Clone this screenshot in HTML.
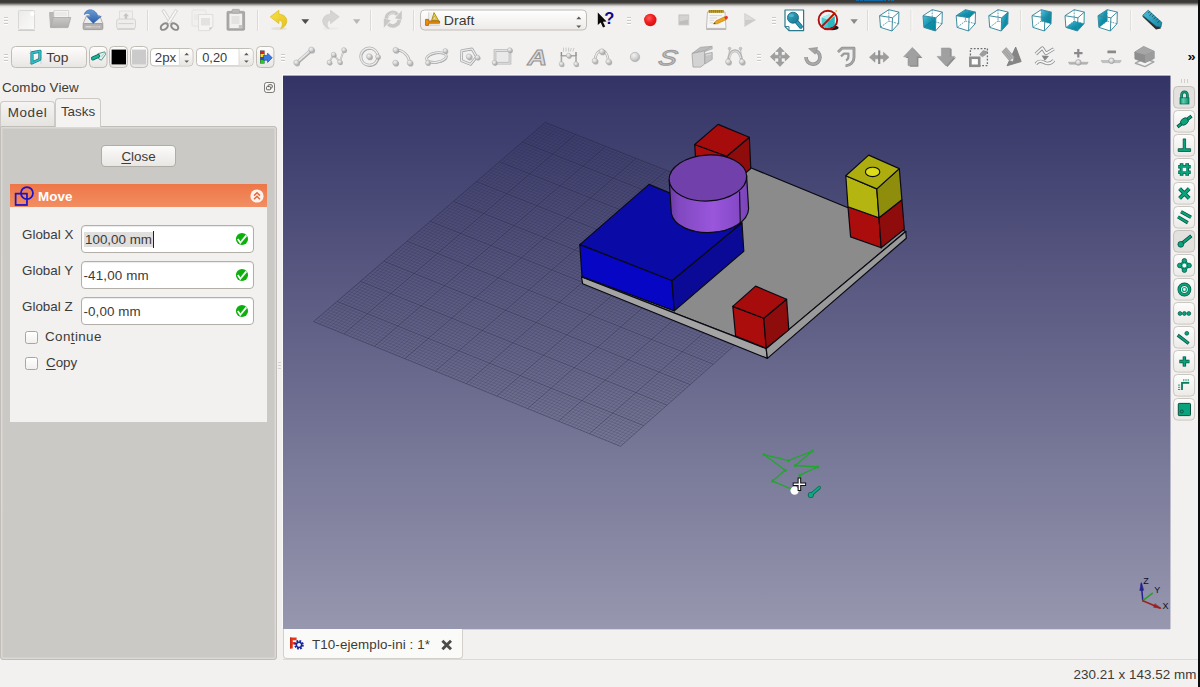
<!DOCTYPE html>
<html lang="en">
<head>
<meta charset="utf-8">
<title>FreeCAD</title>
<style>
html,body{margin:0;padding:0;}
body{width:1200px;height:687px;overflow:hidden;position:relative;background:#f2f1f0;font-family:"Liberation Sans","DejaVu Sans",sans-serif;font-size:13px;color:#3c3b37;}
.abs{position:absolute;}
#topdark{left:0;top:0;width:1200px;height:8px;background:linear-gradient(#3c3b37 0,#3c3b37 29%,#5a5854 40%,#8c8a87 53%,#bcbab7 66%,#e2e1df 80%,#f2f1f0 100%);}
#rightedge{left:1198px;top:0;width:2px;height:687px;background:#0c0c0c;}
#bluemark{left:856px;top:0;width:38px;height:1px;opacity:.85;background:linear-gradient(90deg,#0a70b8 0,#0a70b8 8%,transparent 8%,transparent 10%,#0a70b8 10%,#0a70b8 18%,transparent 18%,transparent 21%,#0a70b8 21%,#0a70b8 70%,transparent 70%,transparent 74%,#0a70b8 74%,#0a70b8 80%,transparent 80%,transparent 83%,#0a70b8 83%,#0a70b8 90%,transparent 90%,transparent 93%,#0a70b8 93%);}
/* left dock */
#combotitle{left:2px;top:80px;font-size:13.4px;letter-spacing:.12px;white-space:nowrap;}
.tab{border:1px solid #cdcac5;border-bottom:none;border-radius:4px 4px 0 0;box-sizing:border-box;text-align:center;white-space:nowrap;}
#tabModel{left:0px;top:101px;width:54.5px;height:25px;background:linear-gradient(#f5f4f3,#e5e3e0);line-height:22.4px;font-size:13.4px;letter-spacing:.6px;text-indent:.6px;}
#tabTasks{left:55px;top:98px;width:46px;height:29.4px;background:#f4f3f2;line-height:25.4px;font-size:13.4px;z-index:3;}
#pane{left:0px;top:126px;width:277px;height:533.5px;box-sizing:border-box;border:1px solid #c1beb9;background:#cbc9c6;border-radius:0 3px 3px 3px;box-shadow:inset 0 0 0 1.4px #dbd9d6;}
#closebtn{left:101px;top:145px;width:75px;height:22px;box-sizing:border-box;border:1px solid #b0aca6;border-radius:4px;background:linear-gradient(#fbfbfa,#e9e7e4);text-align:center;line-height:21.5px;font-size:13.4px;}
#movehdr{left:10px;top:184px;width:257px;height:23px;background:linear-gradient(#ee7647,#f28e63);}
#movetxt{left:38px;top:189px;letter-spacing:.1px;color:#fff;font-weight:bold;font-size:13.4px;}
#content{left:10px;top:207px;width:257px;height:215px;background:#f2f1f0;}
.lbl{font-size:13.4px;white-space:nowrap;}
.fld{left:81px;width:173px;height:28px;box-sizing:border-box;border:1px solid #b2aea8;border-radius:4px;background:#fff;box-shadow:inset 0 1px 1px rgba(0,0,0,.08);}
.fld span{position:absolute;left:4px;top:6px;font-size:13.4px;white-space:nowrap;}
.cb{left:25px;width:13px;height:13px;box-sizing:border-box;border:1px solid #a9a59f;border-radius:2.5px;background:linear-gradient(#fff,#f1f0ef);}
/* bottom */
#doctab{left:283px;top:629px;width:180px;height:30px;box-sizing:border-box;border:1px solid #d3d0cc;border-top:none;border-radius:0 0 4px 4px;background:#fafaf9;}
#tabline{left:283px;top:659px;width:915px;height:1px;background:#dcdad6;}
#status{right:3.5px;top:667px;font-size:13.4px;letter-spacing:.05px;white-space:nowrap;}
#view{left:283px;top:75px;width:888px;height:554px;background:linear-gradient(#333366,#9797af);overflow:hidden;box-shadow:-1px -1px 0 #faf9f9;}
u{text-decoration:underline;text-underline-offset:2px;}
</style>
</head>
<body>
<div id="topdark" class="abs"></div>
<div id="bluemark" class="abs"></div>

<!-- TOOLBARS -->
<div id="toolbars">
<svg class="abs" style="left:0;top:0" width="1200" height="75" viewBox="0 0 1200 75">
<defs>
<g id="hdl"><path d="M0 .5H4M0 3.5H4M0 6.5H4" stroke="#cdcac5" stroke-width="1"/><path d="M0 1.5H4M0 4.5H4M0 7.5H4" stroke="#fff" stroke-width="1"/></g>
<g id="sep"><path d="M.5 0V21" stroke="#dcdad6"/><path d="M1.5 0V21" stroke="#faf9f8"/></g>
<linearGradient id="gpaper" x1="0" y1="0" x2="1" y2="1"><stop offset="0" stop-color="#ebeae8"/><stop offset="1" stop-color="#fbfbfa"/></linearGradient>
<linearGradient id="gfold" x1="0" y1="0" x2="0" y2="1"><stop offset="0" stop-color="#c9c8c6"/><stop offset="1" stop-color="#aeadab"/></linearGradient>
<linearGradient id="gblue" x1="0" y1="0" x2="0" y2="1"><stop offset="0" stop-color="#6a9bd6"/><stop offset="1" stop-color="#2a5ea8"/></linearGradient>
<linearGradient id="gyel" x1="0" y1="0" x2="1" y2="1"><stop offset="0" stop-color="#f8e14a"/><stop offset="1" stop-color="#e4c21c"/></linearGradient>
<linearGradient id="gcombo" x1="0" y1="0" x2="0" y2="1"><stop offset="0" stop-color="#ffffff"/><stop offset="1" stop-color="#ecebe9"/></linearGradient>
<radialGradient id="gred" cx=".4" cy=".35" r=".7"><stop offset="0" stop-color="#ff5a5a"/><stop offset=".5" stop-color="#ef2020"/><stop offset="1" stop-color="#d40c0c"/></radialGradient>
<linearGradient id="grul" x1="0" y1="0" x2="1" y2="1"><stop offset="0" stop-color="#4cc0dc"/><stop offset="1" stop-color="#1a86a4"/></linearGradient><linearGradient id="gteal" x1="0" y1="0" x2="1" y2="1"><stop offset="0" stop-color="#3aa8c4"/><stop offset="1" stop-color="#12778f"/></linearGradient>
<radialGradient id="gball" cx=".38" cy=".32" r=".75"><stop offset="0" stop-color="#f2f2f2"/><stop offset=".55" stop-color="#d2d2d2"/><stop offset="1" stop-color="#a6a6a6"/></radialGradient>
</defs>
<!-- row 1 handles -->
<use href="#hdl" x="4" y="17"/>
<!-- new -->
<rect x="18.5" y="10.5" width="16" height="19" rx="1" fill="url(#gpaper)" stroke="#d9d7d4"/><path d="M18 30.5H35" stroke="#d0cecb" stroke-width="1"/><circle cx="32.3" cy="13.8" r="2.2" fill="#fff"/>
<!-- open -->
<path d="M49.5 12.5H53L54 11.5H58V27H50.5Z" fill="#b9b8b6" stroke="#b0afad" stroke-width=".8"/><path d="M54 10.5H68.6V20H54Z" fill="#f4f3f2" stroke="#cfcecb" stroke-width=".8"/><path d="M55.5 13H67M55.5 15H67" stroke="#dddcda" stroke-width=".8"/><path d="M53.2 17.5H70.8L68 27.6H50.6Z" fill="url(#gfold)" stroke="#a9a8a6" stroke-width=".8"/>
<!-- save -->
<path d="M86.6 15.5H99.6L103 24H83Z" fill="#edecea" stroke="#a8a7a5" stroke-width=".9"/><rect x="83.2" y="23.6" width="19.6" height="6" rx="1.2" fill="#b4b3b1" stroke="#9a9997" stroke-width=".9"/><path d="M85.5 26.7H100" stroke="#d8d7d5" stroke-width="1.6" stroke-dasharray="6 1 1 1 1 1 1 1"/><path d="M84.3 14.6C85 10 91 8.2 95 11.6C97 13.3 97.6 15 97.8 16.4H101.3L93.2 23.4L86.8 16.4H90.8C90.5 13.5 87 12.6 84.3 14.6Z" fill="url(#gblue)" stroke="#3a6cb4" stroke-width=".6"/>
<!-- print (disabled) -->
<rect x="119.5" y="11" width="13" height="9" fill="#f0efed" stroke="#dbd9d6" stroke-width=".8"/><path d="M126 13L129 16.2H127.2V19H124.8V16.2H123Z" fill="#c6c5c3"/><rect x="116.7" y="19" width="18.8" height="9.6" rx="2" fill="#eeedeb" stroke="#d2d0cd" stroke-width=".9"/><path d="M118.5 23.6H133.5" stroke="#d2d0cd" stroke-width="1"/><path d="M117 29.3H135" stroke="#cfcdca" stroke-width="1"/>
<use href="#sep" x="147" y="10"/>
<!-- cut -->
<path d="M161.9 10.8L164 9.4L172.3 22.6L170 23.9Z" fill="#f6f5f4" stroke="#cbc9c6" stroke-width=".8"/><path d="M177.5 10.8L175.4 9.4L167.1 22.6L169.4 23.9Z" fill="#f8f7f6" stroke="#cbc9c6" stroke-width=".8"/><ellipse cx="164.3" cy="26.6" rx="4" ry="2.7" transform="rotate(-38 164.3 26.6)" fill="none" stroke="#8e8d8b" stroke-width="2"/><ellipse cx="174.7" cy="26.6" rx="4" ry="2.7" transform="rotate(38 174.7 26.6)" fill="none" stroke="#8e8d8b" stroke-width="2"/>
<!-- copy -->
<rect x="192" y="10" width="14" height="16" rx="1" fill="#f1f0ee" stroke="#e2e0dd" stroke-width=".8"/><path d="M194 15H201M194 17H201M194 19H201" stroke="#e3e1df" stroke-width=".8"/><path d="M198.5 14.5H212.8V27L209.5 30.6H198.5Z" fill="#f5f4f3" stroke="#dad8d5" stroke-width=".8"/><rect x="201" y="18" width="9" height="7.5" fill="#e3e2e0"/><path d="M209.4 30.4V27.2H212.6Z" fill="#cfcecb"/>
<!-- paste -->
<rect x="227" y="11.4" width="17.6" height="18.8" rx="1" fill="#a9a8a6" stroke="#9d9c9a" stroke-width=".8"/><rect x="229.4" y="13.6" width="12.8" height="14.6" fill="#f1f0ee"/><rect x="231.5" y="16" width="8" height="8" fill="#e3e2e0"/><rect x="232" y="9.3" width="7.6" height="4" rx="1" fill="#bab9b7" stroke="#a3a2a0" stroke-width=".6"/><path d="M238.8 28.2V25H242.2V28.2Z" fill="#c6c5c3"/>
<use href="#sep" x="257" y="10"/>
<!-- undo -->
<ellipse cx="279" cy="28.6" rx="8" ry="1.6" fill="#e4e2df"/>
<path d="M270.3 16.8L278.9 10.3V14.2C284.2 14.4 287 17.6 286.7 21.6C286.4 25 283.8 27.8 280.7 28.6C282.6 26 283 22.7 281 20.9C280.4 20.3 279.7 20.1 278.9 20.1V23.6Z" fill="url(#gyel)" stroke="#d8b81a" stroke-width=".7" stroke-linejoin="round"/>
<path d="M301.4 19.2H309.2L305.3 24.1Z" fill="#4d4c4a"/>
<!-- redo -->
<ellipse cx="330.5" cy="28.6" rx="8" ry="1.4" fill="#eceae8"/>
<path d="M339.2 16.8L330.6 10.3V14.2C325.3 14.4 322.5 17.6 322.8 21.6C323.1 25 325.7 27.8 328.8 28.6C326.9 26 326.5 22.7 328.5 20.9C329.1 20.3 329.8 20.1 330.6 20.1V23.6Z" fill="#d6d5d3" stroke="#cbcac8" stroke-width=".7" stroke-linejoin="round"/>
<path d="M353 19.2H360.4L356.7 24.1Z" fill="#b9b7b4"/>
<use href="#sep" x="370" y="10"/>
<!-- refresh -->
<g fill="none" stroke="#c9c8c6" stroke-width="3.6"><path d="M386.3 18.6A6.5 6.5 0 0 1 397.4 14.4"/><path d="M399.3 19.8A6.5 6.5 0 0 1 388.2 24"/></g><path d="M394.8 18.2L401.8 10.6V19.8Z" fill="#c9c8c6"/><path d="M390.8 20.2L383.8 27.8V18.6Z" fill="#c9c8c6"/><path d="M388 17A5 5 0 0 1 395 13.4" fill="none" stroke="#dddcda" stroke-width="1"/>
<use href="#sep" x="413" y="10"/>
<!-- combo -->
<rect x="420.5" y="10" width="166" height="20" rx="4" fill="url(#gcombo)" stroke="#c0bcb6"/>
<path d="M576.3 19.2L578.8 16.6L581.3 19.2Z M576.3 25.4L578.8 28L581.3 25.4Z" fill="#5c5b58"/>
<!-- draft icon -->
<path d="M431 12.4V26.4" stroke="#e8e6e2" stroke-width="1"/><path d="M428.8 12.2V25.2H439.8" stroke="#bdbbb7" stroke-width=".7" fill="none"/>
<path d="M434 12.6L438.6 20.6H431.6Z" fill="#f2d438" stroke="#9a7a10" stroke-width=".8" stroke-linejoin="round"/><path d="M434.2 16L436.2 19.2H432.8Z" fill="#f8f0b0" stroke="#9a7a10" stroke-width=".4"/>
<path d="M425.6 19.4H428.4V21H439.6V23.2H428.4V25.4H425.6Z" fill="#f0900c" stroke="#a45c04" stroke-width=".8" stroke-linejoin="round"/>
<text x="443.8" y="24.6" font-size="13.4" fill="#3c3b37" textLength="30.6" lengthAdjust="spacingAndGlyphs">Draft</text>
<!-- whats this -->
<path d="M597.8 12.6V25L600.7 22.6L603 27.6L605.2 26.6L602.9 21.8L606.6 21.4Z" fill="#0a0a0a"/>
<text x="604.2" y="24.4" font-size="16.5" font-weight="bold" fill="#0c0c8c">?</text>
<use href="#hdl" x="627" y="17"/>
<!-- record -->
<circle cx="650.3" cy="20" r="6.2" fill="url(#gred)"/>
<!-- stop -->
<rect x="678.8" y="14.8" width="10" height="10.2" fill="#bfbebc" stroke="#cfcecc" stroke-width=".8"/><path d="M679.4 15.4H688.2V19.4L679.4 21.4Z" fill="#d4d3d1"/>
<!-- notepad -->
<path d="M707.5 12H725L726 28.4H706.4Z" fill="#f6f6f5" stroke="#b9b8b6" stroke-width=".9"/><path d="M706.2 29.3H726.2" stroke="#b3b2b0" stroke-width="1.2"/>
<rect x="708.4" y="10" width="15.6" height="2.8" rx=".8" fill="#b9982a"/><path d="M709.5 10V12.8M711.5 10V12.8M713.5 10V12.8M715.5 10V12.8M717.5 10V12.8M719.5 10V12.8M721.5 10V12.8" stroke="#8a6e16" stroke-width=".6"/>
<path d="M709.6 15.6H722M709.6 18H717M709.6 20.4H714M709.6 22.8H713" stroke="#cfcecc" stroke-width=".8"/>
<path d="M713.4 24L716 20.8L725 16.6L726.6 19.4L717.4 23.8Z" fill="#eba51e" stroke="#a8700c" stroke-width=".5"/><path d="M724.2 17L726.4 15.9C727.2 15.6 728.4 17.6 727.6 18.4L725.6 19.6Z" fill="#e43030"/><path d="M713.4 24L714.6 22.4L715.6 23.4Z" fill="#333"/>
<!-- play -->
<path d="M744.6 13.4L755.6 20L744.6 26.6Z" fill="#cbcac8" stroke="#d6d5d3" stroke-width=".8"/><path d="M745.2 14.4L754 19.7L745.2 19.9Z" fill="#dddcda"/>
<use href="#hdl" x="772" y="17"/>
<!-- fit all -->
<path d="M785 10H803.6V30.6H789L785 26.6Z" fill="#fff" stroke="#2a7a8c" stroke-width="1.2" stroke-linejoin="round"/><path d="M785 26.6H789V30.6" fill="none" stroke="#2a7a8c" stroke-width="1"/>
<path d="M796.4 21.4L800.8 26.6" stroke="#1a6c80" stroke-width="4.2" stroke-linecap="round"/><path d="M796.4 21.4L800.8 26.6" stroke="#2a9ab8" stroke-width="2.6" stroke-linecap="round"/>
<circle cx="793" cy="17.7" r="5.5" fill="url(#gteal)" stroke="#156a80" stroke-width=".9"/><ellipse cx="791.4" cy="15.6" rx="2.6" ry="1.6" fill="#5cc0d8" opacity=".7"/>
<!-- no draw style -->
<ellipse cx="832" cy="27.8" rx="6.6" ry="2.4" fill="#1a1a1a"/>
<path d="M821.6 17.4L829 14.4L834.6 16.6V26L827.6 28.6L821.6 26Z" fill="#3fd0d6"/><path d="M821.6 17.4L829 14.4L834.6 16.6L827.6 19.6Z" fill="#a8ecee"/><path d="M827.6 19.6V28.6L834.6 26V16.6Z" fill="#2cb8c0"/>
<path d="M828.6 18.6L834.6 11.8L836.2 13L830.4 20Z" fill="#f4d820"/><circle cx="836.2" cy="11" r=".8" fill="#f09010"/>
<circle cx="827.9" cy="20" r="9.3" fill="none" stroke="#b00f0f" stroke-width="1.9"/><path d="M821.4 26.8L834.6 13.4" stroke="#b00f0f" stroke-width="1.9"/>
<path d="M850.4 19.2H857.8L854.1 24Z" fill="#8a8987"/>
<use href="#sep" x="867" y="10"/>
<!-- cubes -->
<defs>
<g id="cubeb"><path d="M.6 6.7L9.8 .7L19.9 3.1L19.6 14.7L13 22L1.5 18.4Z" fill="#fff"/></g>
<g id="cubew" fill="none" stroke="#35879b" stroke-linejoin="round"><path d="M9.8 .7V12L1.5 18.4M9.8 12L19.6 14.7" stroke-width=".8" stroke-dasharray="1.8 1"/><path d="M.6 6.7L9.8 .7L19.9 3.1L19.6 14.7L13 22L1.5 18.4ZM.6 6.7L13.5 8.8L19.9 3.1M13.5 8.8L13 22" stroke-width=".95"/></g>
<linearGradient id="gcf" x1="0" y1="0" x2="1" y2="1"><stop offset="0" stop-color="#52c0da"/><stop offset=".55" stop-color="#0e8eaa"/><stop offset="1" stop-color="#08829c"/></linearGradient>
</defs>
<g transform="translate(879 9)"><use href="#cubeb"/><use href="#cubew"/></g>
<use href="#sep" x="910.5" y="10"/>
<g transform="translate(922.4 9)"><use href="#cubeb"/><path d="M.6 6.7L13.5 8.8L13 22L1.5 18.4Z" fill="url(#gcf)"/><path d="M1.5 18.4L9.8 12L13.3 13.4" stroke="#066e84" stroke-width=".8" fill="none"/><use href="#cubew"/></g>
<g transform="translate(955.6 9)"><use href="#cubeb"/><path d="M.6 6.7L9.8 .7L19.9 3.1L13.5 8.8Z" fill="url(#gcf)"/><use href="#cubew"/></g>
<g transform="translate(988.2 9)"><use href="#cubeb"/><path d="M13.5 8.8L19.9 3.1L19.6 14.7L13 22Z" fill="url(#gcf)"/><use href="#cubew"/></g>
<use href="#sep" x="1020.2" y="10"/>
<g transform="translate(1031.4 9)"><use href="#cubeb"/><path d="M9.8 .7L19.9 3.1L19.6 14.7L9.8 12Z" fill="url(#gcf)"/><use href="#cubew"/></g>
<g transform="translate(1064.4 9)"><use href="#cubeb"/><path d="M1.5 18.4L9.8 12L19.6 14.7L13 22Z" fill="url(#gcf)"/><use href="#cubew"/></g>
<g transform="translate(1097.4 9)"><use href="#cubeb"/><path d="M.6 6.7L9.8 .7V12L1.5 18.4Z" fill="url(#gcf)"/><use href="#cubew"/></g>
<use href="#sep" x="1130.2" y="10"/>
<!-- ruler -->
<path d="M1142.4 16.6L1156 29.6L1160.8 28.4L1160 24.4L1146 13.4Z" fill="#2c2c2c"/>
<path d="M1142.6 15.4L1148.2 10.2L1161.8 22.4L1160.9 27.2L1156.4 26.6Z" fill="url(#grul)" stroke="#0f5e72" stroke-width=".7" stroke-linejoin="round"/>
<path d="M1149.6 11.6L1148.2 13.2M1151.6 13.4L1149.6 15.6M1153.6 15.2L1152.2 16.8M1155.6 17L1153.6 19.2M1157.6 18.8L1156.2 20.4M1159.6 20.6L1157.6 22.8" stroke="#083e4c" stroke-width=".8"/>
<!-- ROW 2 -->
<defs>
<linearGradient id="gbtn" x1="0" y1="0" x2="0" y2="1"><stop offset="0" stop-color="#fdfdfc"/><stop offset="1" stop-color="#e8e6e3"/></linearGradient>
<g id="ball"><circle cx=".9" cy="1" r="2.8" fill="#8c8c8c" opacity=".6"/><circle r="2.7" fill="url(#gball)" stroke="#b0b0b0" stroke-width=".5"/></g>
<g id="sball"><circle cx=".8" cy=".9" r="2.4" fill="#8c8c8c" opacity=".6"/><circle r="2.3" fill="url(#gball)" stroke="#b0b0b0" stroke-width=".5"/></g>
</defs>
<use href="#hdl" x="4" y="54"/>
<rect x="11.5" y="46.5" width="75" height="21" rx="4" fill="url(#gbtn)" stroke="#c0bcb6"/>
<g fill="none" stroke-linejoin="round"><path d="M32 52.8L40 51.2L39.8 59.4L32 63Z" stroke="#0f6e78" stroke-width="3"/><path d="M32 52.8L40 51.2L39.8 59.4L32 63Z" stroke="#2ec4cc" stroke-width="1.7"/><path d="M30.6 49.6V64.6M41 55V64M29 53.4L42 51.2M29.4 63.6L42 57.6" stroke="#4aa0aa" stroke-width=".5" opacity=".55"/></g>
<text x="46.2" y="61.8" font-size="13.4" fill="#3c3b37" textLength="22.2" lengthAdjust="spacingAndGlyphs">Top</text>
<rect x="89.5" y="46.5" width="17.5" height="21" rx="4" fill="url(#gbtn)" stroke="#c0bcb6"/>
<path d="M97.8 53.8L104.8 51.8L105.6 54.4L101.4 60.2L98.8 59Z" fill="#dff2ec" stroke="#3c7e70" stroke-width=".8" stroke-linejoin="round"/><path d="M101 56.6L104.6 53.2" stroke="#9ad4c4" stroke-width="1"/><path d="M93 58.4L98.2 56" stroke="#0a6a58" stroke-width="4" stroke-linecap="round"/><path d="M93 58.4L98.2 56" stroke="#16b49a" stroke-width="2.4" stroke-linecap="round"/>
<rect x="109.5" y="46.5" width="18" height="21" rx="4" fill="url(#gbtn)" stroke="#c0bcb6"/><rect x="111.6" y="49.6" width="14.4" height="14.8" fill="#000"/>
<rect x="130.5" y="46.5" width="17.2" height="21" rx="4" fill="url(#gbtn)" stroke="#c0bcb6"/><rect x="132" y="49.6" width="14" height="14.8" fill="#cbcbcb"/>
<rect x="150.5" y="48.5" width="42.4" height="17.4" rx="3.5" fill="#fff" stroke="#c0bcb6"/><path d="M179.4 49V65.4H189.4A3 3 0 0 0 192.4 62.4V52A3 3 0 0 0 189.4 49Z" fill="url(#gbtn)"/><path d="M179.4 49V65.4" stroke="#d8d5d0" stroke-width=".8"/>
<path d="M184.4 55.2L186.7 52.8L189 55.2ZM184.4 60.4L186.7 62.8L189 60.4Z" fill="#5c5b58"/>
<text x="154.8" y="62.4" font-size="13.4" fill="#3c3b37" textLength="21.4" lengthAdjust="spacingAndGlyphs">2px</text>
<rect x="196.5" y="48.5" width="56.6" height="17.4" rx="3.5" fill="#fff" stroke="#c0bcb6"/><path d="M239 49V65.4H249.6A3 3 0 0 0 252.6 62.4V52A3 3 0 0 0 249.6 49Z" fill="url(#gbtn)"/><path d="M239 49V65.4" stroke="#d8d5d0" stroke-width=".8"/>
<path d="M244.1 55.2L246.4 52.8L248.7 55.2ZM244.1 60.4L246.4 62.8L248.7 60.4Z" fill="#5c5b58"/>
<text x="202.2" y="62.4" font-size="13.4" fill="#3c3b37" textLength="25" lengthAdjust="spacingAndGlyphs">0,20</text>
<rect x="256.5" y="46.5" width="17.4" height="21" rx="4" fill="url(#gbtn)" stroke="#c0bcb6"/>
<rect x="260" y="50.4" width="4.6" height="13.2" fill="#555"/><rect x="260.6" y="51" width="3.6" height="3" fill="#f01818"/><rect x="260.6" y="54" width="3.6" height="3" fill="#f4e020"/><rect x="260.6" y="57" width="3.6" height="3" fill="#2848d8"/><rect x="260.6" y="60" width="3.6" height="3" fill="#20d020"/>
<path d="M263.4 55.4H267.6V53.2L272.2 57.8L267.6 62.4V60.2H263.4Z" fill="#3a7ae0" stroke="#1c4a9c" stroke-width=".7" stroke-linejoin="round"/>
<use href="#hdl" x="281" y="54"/>
<!-- line -->
<path d="M297.6 64L312.6 50.8" stroke="#a6a6a6" stroke-width="1.2"/><path d="M296.4 62.8L311.4 49.5" stroke="#b9b9b9" stroke-width="2.8"/><path d="M296.4 62.8L311.4 49.5" stroke="#ececec" stroke-width="1.4"/><use href="#ball" x="296.4" y="62.6"/><use href="#ball" x="311.4" y="49.7"/>
<!-- wire -->
<path d="M329.3 62.4L333.5 54.5L339.8 62L343.9 49.9" fill="none" stroke="#b4b4b4" stroke-width="1.8"/><path d="M329.3 62.4L333.5 54.5L339.8 62L343.9 49.9" fill="none" stroke="#e4e4e4" stroke-width=".8"/><use href="#sball" x="329.3" y="62.4"/><use href="#sball" x="333.5" y="54.5"/><use href="#sball" x="339.8" y="62"/><use href="#sball" x="343.9" y="49.9"/>
<!-- circle -->
<circle cx="370" cy="57.5" r="8.6" fill="none" stroke="#a0a0a0" stroke-width="1.6"/><circle cx="369.3" cy="56.6" r="8.6" fill="none" stroke="#b4b4b4" stroke-width="2.8"/><circle cx="369.3" cy="56.6" r="8.6" fill="none" stroke="#ededed" stroke-width="1.3"/><use href="#ball" x="369.2" y="56.4"/><use href="#sball" x="377.8" y="56.6"/>
<!-- arc -->
<path d="M396.4 50.8C403.8 50.8 409.4 55.9 410.6 63.7" fill="none" stroke="#a0a0a0" stroke-width="1.6"/><path d="M395.6 49.9C403 49.9 408.6 55 409.8 62.8" fill="none" stroke="#b2b2b2" stroke-width="2.8"/><path d="M395.6 49.9C403 49.9 408.6 55 409.8 62.8" fill="none" stroke="#ececec" stroke-width="1.3"/><use href="#ball" x="395.6" y="50"/><use href="#ball" x="409.8" y="62.8"/><use href="#ball" x="395.4" y="62.8"/>
<!-- ellipse -->
<ellipse cx="437" cy="58.2" rx="10" ry="4.7" transform="rotate(-9 437 58.2)" fill="none" stroke="#a2a2a2" stroke-width="1.4"/><ellipse cx="436.4" cy="57.4" rx="10" ry="4.7" transform="rotate(-9 436.4 57.4)" fill="none" stroke="#b2b2b2" stroke-width="2.6"/><ellipse cx="436.4" cy="57.4" rx="10" ry="4.7" transform="rotate(-9 436.4 57.4)" fill="none" stroke="#ececec" stroke-width="1.2"/><use href="#sball" x="445.2" y="50.8"/><use href="#sball" x="427.7" y="62.8"/>
<!-- polygon -->
<path d="M472.6 49.6L462.4 51.2L462 61.2L471 64.9L477.2 57.4Z" fill="none" stroke="#9a9a9a" stroke-width="1.2" stroke-linejoin="round"/><path d="M472 49L461.8 50.6L461.4 60.6L470.4 64.3L476.6 56.8Z" fill="none" stroke="#adadad" stroke-width="2.8" stroke-linejoin="round"/><path d="M472 49L461.8 50.6L461.4 60.6L470.4 64.3L476.6 56.8Z" fill="none" stroke="#ececec" stroke-width="1.2" stroke-linejoin="round"/><use href="#ball" x="468.9" y="56.6"/><use href="#sball" x="477.4" y="57.4"/>
<!-- rectangle -->
<rect x="495" y="50.6" width="15" height="12.6" fill="#e9e9e9" stroke="#b4b4b4" stroke-width="2.6"/><rect x="495" y="50.6" width="15" height="12.6" fill="none" stroke="#e6e6e6" stroke-width="1"/><use href="#sball" x="509.8" y="50"/><use href="#sball" x="494.4" y="62.6"/>
<!-- text A -->
<text x="527.4" y="65.2" font-size="22" font-weight="bold" font-style="italic" fill="#dadada" stroke="#939393" stroke-width="1" textLength="19.5" lengthAdjust="spacingAndGlyphs">A</text>
<!-- dimension -->
<path d="M561.4 64V55.8H576V64" fill="none" stroke="#a8a8a8" stroke-width="1.6"/><path d="M561.4 55.8V52M576 55.8V52" stroke="#8c8c8c" stroke-width="1.4"/><path d="M563.5 47.6V51.6M566 47.6V51.6M568.6 47.6V51.6M571.4 48L570 51.6M574 48L572.8 51.6" stroke="#c4c4c4" stroke-width=".9"/><use href="#sball" x="561.4" y="64"/><use href="#sball" x="576" y="64"/><use href="#sball" x="568.6" y="55.6"/>
<!-- bspline -->
<path d="M594.8 60.8C595.5 54 598.5 50.6 601.8 50.6C605.4 50.6 607.8 55 608.5 61.6" fill="none" stroke="#b4b4b4" stroke-width="2.6"/><path d="M594.8 60.8C595.5 54 598.5 50.6 601.8 50.6C605.4 50.6 607.8 55 608.5 61.6" fill="none" stroke="#ececec" stroke-width="1.1"/><use href="#ball" x="594.8" y="60.8"/><use href="#ball" x="601.8" y="51.4"/><use href="#ball" x="608.5" y="61.6"/>
<!-- point -->
<circle cx="635" cy="57" r="4.7" fill="url(#gball)" stroke="#b2b2b2" stroke-width=".7"/>
<!-- shapestring S -->
<g transform="translate(0 57) skewX(-12) translate(0 -57)"><text x="659" y="64.6" font-size="21" font-style="italic" fill="#c4c4c4" stroke="#9c9c9c" stroke-width="1" textLength="18.5" lengthAdjust="spacingAndGlyphs">S</text></g>
<!-- facebinder -->
<path d="M692 53.5L700.4 47.3L712.1 46.3L704.6 50.8Z" fill="#bcbcbc" stroke="#a2a2a2" stroke-width=".7" stroke-linejoin="round"/><path d="M692 53.5L704.6 50.8V64L700.6 67.1H693Z" fill="#d3d3d3" stroke="#a2a2a2" stroke-width=".8" stroke-linejoin="round"/><path d="M704.9 50.9L712.2 46.5V48.9L704.9 51.6Z" fill="#c6c6c6" stroke="#a2a2a2" stroke-width=".6"/><path d="M704.9 54L712.2 52.4V59.4L704.9 64Z" fill="#c4c4c4" stroke="#a6a6a6" stroke-width=".8" stroke-linejoin="round"/><path d="M705.8 55.2L711.3 54" stroke="#e4e4e4" stroke-width=".8"/>
<!-- bezier -->
<path d="M728.2 61.7L729.6 48.8M741.9 61.7L740.5 48.8" stroke="#b4b4b4" stroke-width=".9"/><path d="M728.2 61.7C729 54 731.6 50.8 735 50.8C738.6 50.8 741 54 741.9 61.7" fill="none" stroke="#b2b2b2" stroke-width="3"/><path d="M729.4 58C730.4 53.4 732.4 51 735 51C737.8 51 739.8 53.4 740.8 58" fill="none" stroke="#dedede" stroke-width="1.2"/><circle cx="729.6" cy="48.6" r="1.4" fill="#c9c9c9" stroke="#a8a8a8" stroke-width=".5"/><circle cx="740.5" cy="48.6" r="1.4" fill="#c9c9c9" stroke="#a8a8a8" stroke-width=".5"/><use href="#ball" x="728.2" y="61.7"/><use href="#ball" x="741.9" y="61.7"/>
<use href="#hdl" x="757" y="54"/>
<!-- move -->
<path d="M780 47L784.2 51.5H781.4V55.3H785.2V52.5L789.7 56.7L785.2 60.9V58.1H781.4V62H784.2L780 66.5L775.8 62H778.6V58.1H774.8V60.9L770.3 56.7L774.8 52.5V55.3H778.6V51.5H775.8Z" fill="#9f9f9f" stroke="#8c8c8c" stroke-width=".5" stroke-linejoin="round"/><rect x="778.9" y="55.6" width="2.2" height="2.2" fill="#b6b6b6"/>
<!-- rotate -->
<path d="M806 57A7 7 0 1 0 813.4 50.2" fill="none" stroke="#8f8f8f" stroke-width="3.6"/><path d="M806 57A7 7 0 1 0 813.4 50.2" fill="none" stroke="#a9a9a9" stroke-width="2.2"/><path d="M808.6 48.6L817.6 47.4L815.2 54.2Z" fill="#a4a4a4" stroke="#8f8f8f" stroke-width=".6" stroke-linejoin="round"/>
<!-- offset -->
<path d="M838 52L842 48.2H854V57.6C854 62 850.4 65.4 845.6 65.8" fill="none" stroke="#8f8f8f" stroke-width="2.8" stroke-linejoin="round"/><path d="M838 52L842 48.2H854V57.6C854 62 850.4 65.4 845.6 65.8" fill="none" stroke="#a6a6a6" stroke-width="1.4" stroke-linejoin="round"/><path d="M841 56.4L844 53.6H848.4V56.6C848.4 58.6 847.6 59.8 846 60.4" fill="none" stroke="#9a9a9a" stroke-width="2.2" stroke-linejoin="round"/>
<!-- trimex -->
<path d="M869.4 57.2L875 52.2V55.6H883.4V52.2L889 57.2L883.4 62.2V58.8H875V62.2Z" fill="#9d9d9d" stroke="#8e8e8e" stroke-width=".5" stroke-linejoin="round"/><path d="M879.2 50.4V64" stroke="#8e8e8e" stroke-width="2.2"/>
<!-- upgrade -->
<path d="M914 49L922.4 58H918.4V66.8H909.8V58H905.4Z" fill="#8c8c8c"/><path d="M912.3 47.4L921 56.8H917V65.6H908V56.8H903.6Z" fill="#a0a0a0" stroke="#909090" stroke-width=".5" stroke-linejoin="round"/>
<!-- downgrade -->
<path d="M947.4 67L956 57.6H951.6V48.8H943V57.6H938.6Z" fill="#8c8c8c"/><path d="M946 66L954.6 56.4H950.2V48H941.4V56.4H937Z" fill="#a0a0a0" stroke="#909090" stroke-width=".5" stroke-linejoin="round"/>
<!-- scale -->
<rect x="970.4" y="48.6" width="17" height="17" fill="none" stroke="#6e6e6e" stroke-width="1.3" stroke-dasharray="1.8 1.6"/><rect x="970.4" y="57.8" width="8.8" height="8" fill="#fdfdfd" stroke="#8c8c8c" stroke-width="2.6"/><path d="M979.6 54.6L983 50.6L987.4 51.6L986 54.4L982.4 56.8Z" fill="#9d9d9d" stroke="#8a8a8a" stroke-width=".5"/>
<!-- draft2sketch -->
<path d="M1015.7 47L1007 65.8L1021.2 61.6Z" fill="#858585" stroke="#7a7a7a" stroke-width=".8" stroke-linejoin="round"/><path d="M1002 51.8L1006.2 47.6L1014.4 57L1012.8 61.4L1009.2 60.4Z" fill="#b0b0b0" stroke="#8a8a8a" stroke-width=".6" stroke-linejoin="round"/><path d="M1009.4 60.2L1012.8 61.4L1013.6 58Z" fill="#fafafa" stroke="#8a8a8a" stroke-width=".4"/><path d="M1003.4 50.6L1011 59.6M1004.8 49.2L1012.4 58.2" stroke="#8f8f8f" stroke-width=".6"/>
<!-- wire to bspline -->
<path d="M1035.9 53.9L1042.3 48L1046 53.5L1053.8 48.9" fill="none" stroke="#8f8f8f" stroke-width="3.4" stroke-linejoin="round"/><path d="M1035.9 53.9L1042.3 48L1046 53.5L1053.8 48.9" fill="none" stroke="#f6f6f6" stroke-width="1.7" stroke-linejoin="round"/><path d="M1041.6 55.4L1049 56L1044.8 60.8Z" fill="#858585"/><path d="M1035.9 63.8C1040 58.8 1043 62.4 1046 63.2C1049.4 64 1052 62.6 1053.8 60.4" fill="none" stroke="#8f8f8f" stroke-width="3.4"/><path d="M1035.9 63.8C1040 58.8 1043 62.4 1046 63.2C1049.4 64 1052 62.6 1053.8 60.4" fill="none" stroke="#f6f6f6" stroke-width="1.7"/>
<!-- add point -->
<path d="M1078.3 49V57.4M1074.1 53.2H1082.5" stroke="#8a8a8a" stroke-width="2.2"/><path d="M1068.4 62.2H1088.2L1087 64.2H1069.6Z" fill="#b4b4b4" stroke="#a0a0a0" stroke-width=".5"/><circle cx="1078.3" cy="62.4" r="2.8" fill="url(#gball)" stroke="#999" stroke-width=".6"/>
<!-- del point -->
<rect x="1107.4" y="50.4" width="8.6" height="2.8" rx=".5" fill="#8a8a8a"/><path d="M1101.2 60.6H1121.2L1120 62.6H1102.4Z" fill="#c4c4c4" stroke="#a0a0a0" stroke-width=".5"/><circle cx="1111.5" cy="60.8" r="2.8" fill="url(#gball)" stroke="#999" stroke-width=".6"/>
<!-- shape2dview -->
<path d="M1135.4 63.2L1145 66.6L1153.8 61.8L1144 58.6Z" fill="#f4f4f4" stroke="#a6a6a6" stroke-width="1.5" stroke-linejoin="round"/>
<path d="M1134.7 52.1L1143.6 46.4L1154.2 51.2V58.4L1145 62.8L1134.9 59Z" fill="#8e8e8e" stroke="#848484" stroke-width=".6" stroke-linejoin="round"/><path d="M1134.7 52.1L1143.6 46.4L1154.2 51.2L1145 54.8Z" fill="#a6a6a6"/><path d="M1145 54.8L1154.2 51.2V58.4L1145 62.8Z" fill="#9c9c9c"/>
<text x="1187.4" y="61.4" font-size="13.5" font-weight="bold" fill="#111" textLength="8.2" lengthAdjust="spacingAndGlyphs">»</text>
</svg>
</div>

<!-- LEFT DOCK -->
<div id="combotitle" class="abs">Combo View</div>
<svg class="abs" style="left:264px;top:81.5px" width="11" height="11" viewBox="0 0 12 12"><rect x=".5" y=".5" width="11" height="11" rx="2.5" fill="#f7f6f5" stroke="#6d6b66"/><rect x="4.5" y="3" width="4.5" height="3.5" rx="1" fill="none" stroke="#55534f" stroke-width="1"/><rect x="2.7" y="5" width="4.5" height="3.5" rx="1" fill="#f7f6f5" stroke="#55534f" stroke-width="1"/></svg>
<div id="pane" class="abs"></div>
<div id="tabModel" class="abs tab">Model</div>
<div id="tabTasks" class="abs tab">Tasks</div>
<div id="closebtn" class="abs"><u>C</u>lose</div>
<div id="movehdr" class="abs"></div>
<svg class="abs" style="left:14px;top:185.4px" width="21.6" height="21.6" viewBox="0 0 20 20"><rect x="1.5" y="8" width="10.5" height="10.5" fill="none" stroke="#1c14c8" stroke-width="1.6"/><circle cx="12" cy="7.5" r="5.6" fill="none" stroke="#1c14c8" stroke-width="1.6"/></svg>
<div id="movetxt" class="abs">Move</div>
<svg class="abs" style="left:250px;top:189px" width="14" height="14" viewBox="0 0 14 14"><circle cx="7" cy="7" r="6.6" fill="#fdf3ee"/><path d="M4 6.6 L7 3.8 L10 6.6 M4 10.2 L7 7.4 L10 10.2" fill="none" stroke="#e86a3a" stroke-width="1.5"/></svg>
<div id="content" class="abs"></div>
<div class="abs lbl" style="left:22px;top:227px">Global X</div>
<div class="abs lbl" style="left:22px;top:263px">Global Y</div>
<div class="abs lbl" style="left:22px;top:299px">Global Z</div>
<div class="abs fld" style="top:225px"><div class="abs" style="left:2px;top:6px;width:69px;height:15px;background:#e1dfdd"></div><span style="left:3px">100,00 mm</span><div class="abs" style="left:70.5px;top:5px;width:1px;height:17px;background:#222"></div><svg class="abs chk" style="left:153px;top:6px" width="14" height="14" viewBox="0 0 14 14"><defs><g id="chk"><circle cx="7" cy="7" r="6.1" fill="#0cb00c"/><path d="M2.8 7L5.3 10.8L11.4 3.4" fill="none" stroke="#fff" stroke-width="1.8" stroke-linejoin="miter"/></g></defs><use href="#chk"/></svg></div>
<div class="abs fld" style="top:261px"><span style="left:1.5px;letter-spacing:.15px">-41,00 mm</span><svg class="abs chk" style="left:153px;top:6px" width="14" height="14" viewBox="0 0 14 14"><use href="#chk"/></svg></div>
<div class="abs fld" style="top:297px"><span style="left:1.5px;letter-spacing:.1px">-0,00 mm</span><svg class="abs chk" style="left:153px;top:6px" width="14" height="14" viewBox="0 0 14 14"><use href="#chk"/></svg></div>
<div class="abs cb" style="top:331px"></div>
<div class="abs cb" style="top:357px"></div>
<div class="abs lbl" style="left:45px;top:329px;letter-spacing:.4px">Con<u>t</u>inue</div>
<div class="abs lbl" style="left:46px;top:355px"><u>C</u>opy</div>

<div class="abs" style="left:278px;top:362px;width:3px;height:1px;background:#d4d1cc;box-shadow:0 3px 0 #d4d1cc,0 6px 0 #d4d1cc"></div>
<!-- 3D VIEW -->
<div id="view" class="abs">
<svg id="scene" class="abs" style="left:0;top:0" width="888" height="554" viewBox="283 75 888 554">
<g fill="none" stroke="#1a1a30">
<path stroke-width=".5" stroke-opacity=".3" d="M316.6 322.8L548.3 123.7M316.0 319.6L622.8 444.2M319.7 324.1L551.3 124.9M318.3 317.6L625.2 442.2M322.7 325.3L554.3 126.1M320.7 315.5L627.5 440.1M325.7 326.5L557.4 127.3M323.0 313.5L629.8 438.0M328.8 327.8L560.4 128.5M325.4 311.5L632.1 436.0M331.8 329.0L563.4 129.7M327.7 309.5L634.5 433.9M334.9 330.2L566.4 130.8M330.1 307.5L636.8 431.9M337.9 331.5L569.4 132.0M332.4 305.4L639.1 429.8M340.9 332.7L572.4 133.2M334.8 303.4L641.5 427.7M347.0 335.2L578.5 135.6M339.4 299.4L646.1 423.6M350.1 336.4L581.5 136.8M341.8 297.4L648.4 421.6M353.1 337.7L584.5 138.0M344.1 295.4L650.7 419.5M356.1 338.9L587.5 139.2M346.5 293.3L653.1 417.4M359.2 340.1L590.6 140.4M348.8 291.3L655.4 415.4M362.2 341.4L593.6 141.6M351.2 289.3L657.7 413.3M365.3 342.6L596.6 142.8M353.5 287.3L660.0 411.3M368.3 343.8L599.6 144.0M355.8 285.3L662.3 409.2M371.4 345.1L602.7 145.2M358.2 283.3L664.7 407.2M377.5 347.6L608.7 147.6M362.9 279.3L669.3 403.1M380.5 348.8L611.7 148.8M365.2 277.3L671.6 401.0M383.6 350.0L614.8 150.0M367.5 275.3L673.9 399.0M386.6 351.3L617.8 151.2M369.9 273.2L676.2 396.9M389.7 352.5L620.8 152.4M372.2 271.2L678.6 394.9M392.7 353.7L623.9 153.6M374.5 269.2L680.9 392.8M395.8 355.0L626.9 154.8M376.9 267.2L683.2 390.8M398.8 356.2L629.9 156.0M379.2 265.2L685.5 388.7M401.9 357.5L633.0 157.2M381.5 263.2L687.8 386.7M408.0 360.0L639.0 159.6M386.2 259.2L692.4 382.6M411.0 361.2L642.1 160.8M388.5 257.2L694.7 380.5M414.1 362.4L645.1 162.0M390.9 255.2L697.0 378.5M417.2 363.7L648.1 163.2M393.2 253.2L699.3 376.5M420.2 364.9L651.2 164.4M395.5 251.2L701.7 374.4M423.3 366.2L654.2 165.6M397.8 249.2L704.0 372.4M426.3 367.4L657.2 166.8M400.2 247.2L706.3 370.3M429.4 368.7L660.3 168.0M402.5 245.2L708.6 368.3M432.5 369.9L663.3 169.2M404.8 243.2L710.9 366.2M438.6 372.4L669.4 171.6M409.5 239.2L715.5 362.2M441.6 373.6L672.4 172.8M411.8 237.2L717.8 360.1M444.7 374.9L675.5 174.0M414.1 235.2L720.1 358.1M447.8 376.1L678.5 175.2M416.4 233.2L722.4 356.1M450.8 377.4L681.6 176.4M418.8 231.2L724.7 354.0M453.9 378.6L684.6 177.6M421.1 229.2L727.0 352.0M457.0 379.9L687.7 178.8M423.4 227.2L729.3 349.9M460.0 381.1L690.7 180.0M425.7 225.3L731.6 347.9M463.1 382.3L693.7 181.2M428.0 223.3L733.9 345.9M469.2 384.8L699.8 183.6M432.7 219.3L738.5 341.8M472.3 386.1L702.9 184.8M435.0 217.3L740.7 339.8M475.4 387.3L705.9 186.0M437.3 215.3L743.0 337.8M478.5 388.6L709.0 187.2M439.6 213.3L745.3 335.7M481.5 389.8L712.0 188.4M441.9 211.3L747.6 333.7M484.6 391.1L715.1 189.6M444.2 209.3L749.9 331.7M487.7 392.3L718.1 190.9M446.6 207.4L752.2 329.6M490.7 393.6L721.2 192.1M448.9 205.4L754.5 327.6M493.8 394.8L724.2 193.3M451.2 203.4L756.8 325.6M500.0 397.3L730.4 195.7M455.8 199.4L761.4 321.5M503.1 398.6L733.4 196.9M458.1 197.4L763.6 319.5M506.1 399.8L736.5 198.1M460.4 195.4L765.9 317.5M509.2 401.1L739.5 199.3M462.7 193.5L768.2 315.4M512.3 402.3L742.6 200.5M465.0 191.5L770.5 313.4M515.4 403.6L745.6 201.7M467.3 189.5L772.8 311.4M518.4 404.8L748.7 202.9M469.6 187.5L775.1 309.4M521.5 406.1L751.8 204.1M471.9 185.5L777.3 307.4M524.6 407.3L754.8 205.4M474.2 183.6L779.6 305.3M530.8 409.8L760.9 207.8M478.9 179.6L784.2 301.3M533.9 411.1L764.0 209.0M481.2 177.6L786.5 299.3M536.9 412.4L767.1 210.2M483.5 175.6L788.7 297.3M540.0 413.6L770.1 211.4M485.8 173.7L791.0 295.2M543.1 414.9L773.2 212.6M488.1 171.7L793.3 293.2M546.2 416.1L776.2 213.8M490.3 169.7L795.6 291.2M549.3 417.4L779.3 215.0M492.6 167.7L797.9 289.2M552.4 418.6L782.4 216.3M494.9 165.8L800.1 287.2M555.5 419.9L785.4 217.5M497.2 163.8L802.4 285.2M561.6 422.4L791.6 219.9M501.8 159.9L807.0 281.1M564.7 423.6L794.6 221.1M504.1 157.9L809.2 279.1M567.8 424.9L797.7 222.3M506.4 155.9L811.5 277.1M570.9 426.2L800.8 223.5M508.7 153.9L813.8 275.1M574.0 427.4L803.9 224.8M511.0 152.0L816.0 273.1M577.1 428.7L806.9 226.0M513.3 150.0L818.3 271.1M580.2 429.9L810.0 227.2M515.6 148.0L820.6 269.1M583.3 431.2L813.1 228.4M517.9 146.1L822.8 267.1M586.4 432.4L816.1 229.6M520.2 144.1L825.1 265.1M592.6 435.0L822.3 232.0M524.7 140.2L829.6 261.0M595.7 436.2L825.4 233.3M527.0 138.2L831.9 259.0M598.8 437.5L828.4 234.5M529.3 136.2L834.2 257.0M601.9 438.7L831.5 235.7M531.6 134.3L836.4 255.0M605.0 440.0L834.6 236.9M533.9 132.3L838.7 253.0M608.1 441.3L837.7 238.1M536.2 130.3L841.0 251.0M611.2 442.5L840.8 239.3M538.5 128.4L843.2 249.0M614.3 443.8L843.8 240.6M540.7 126.4L845.5 247.0M617.4 445.0L846.9 241.8M543.0 124.5L847.7 245.0"/>
<path stroke-width=".7" stroke-opacity=".5" d="M313.6 321.6L545.3 122.5M313.6 321.6L620.5 446.3M344.0 333.9L575.5 134.4M337.1 301.4L643.8 425.7M374.4 346.3L605.7 146.4M360.5 281.3L667.0 405.1M404.9 358.7L636.0 158.4M383.9 261.2L690.1 384.6M435.5 371.1L666.4 170.4M407.2 241.2L713.2 364.2M466.2 383.6L696.8 182.4M430.4 221.3L736.2 343.8M496.9 396.1L727.3 194.5M453.5 201.4L759.1 323.6M527.7 408.6L757.9 206.6M476.5 181.6L781.9 303.3M558.6 421.1L788.5 218.7M499.5 161.8L804.7 283.1M589.5 433.7L819.2 230.8M522.5 142.1L827.4 263.0M620.5 446.3L850.0 243.0M545.3 122.5L850.0 243.0"/>
</g>
<defs><linearGradient id="cyl" x1="0" x2="1" y1="0" y2="0"><stop offset="0" stop-color="#6a3aa0"/><stop offset=".12" stop-color="#8048c0"/><stop offset=".55" stop-color="#9a56dc"/><stop offset=".8" stop-color="#8a4ccc"/><stop offset="1" stop-color="#7a44b8"/></linearGradient></defs>
<g stroke="#0a0a14" stroke-width="1.2" stroke-linejoin="round">
<polygon points="581.5,277.0 750.0,167.5 905.8,231.5 766.2,348.6" fill="#8b8b8b"/>
<polygon points="581.5,277.0 766.2,348.6 767.4,358.4 582.7,283.8" fill="#a4a4a4"/>
<polygon points="766.2,348.6 905.8,231.5 906.3,238.2 767.4,358.4" fill="#9a9a9a"/>
<polygon points="694.7,144.5 726.8,156.3 728.2,188.0 696.5,176.0" fill="#ab0d0d"/>
<polygon points="726.8,156.3 749.3,137.3 750.8,168.5 728.2,188.0" fill="#8f0c0c"/>
<polygon points="718.1,124.4 749.3,137.3 726.8,156.3 694.7,144.5" fill="#a60c0c"/>
<polygon points="579.8,244.6 649.0,184.4 742.0,223.0 672.1,280.8" fill="#0a0aa6"/>
<polygon points="579.8,244.6 672.1,280.8 674.3,310.9 582.0,276.6" fill="#0606c4"/>
<polygon points="672.1,280.8 742.0,223.0 743.8,251.2 674.3,310.9" fill="#0a0a96"/>
<path d="M669.2 180 L671.3 213.3 A38.8 23 -3 0 0 748.6 208.7 L746.6 175.5 Z" fill="url(#cyl)"/>
<path d="M739.6 191.5 L740.3 224.2" fill="none" stroke-width="1.1"/>
<ellipse cx="707.9" cy="178" rx="38.8" ry="23" transform="rotate(-3 707.9 178)" fill="#7240aa"/>
<polygon points="848.0,206.8 879.0,217.7 881.2,247.8 850.6,236.9" fill="#ab0d0d"/>
<polygon points="879.0,217.7 901.9,199.8 904.3,229.3 881.2,247.8" fill="#8f0c0c"/>
<polygon points="845.8,175.8 876.8,188.9 879.0,217.7 848.0,206.8" fill="#b5b512"/>
<polygon points="876.8,188.9 899.3,168.6 901.9,199.8 879.0,217.7" fill="#8e8e0c"/>
<polygon points="868.7,155.1 899.3,168.6 876.8,188.9 845.8,175.8" fill="#adad10"/>
<ellipse cx="872.6" cy="171.9" rx="7.2" ry="4.7" fill="#dcdc18" stroke-width="1.1"/>
<path d="M866.6 170.6A6.4 3.8 0 0 1 878.6 170.6A6.6 5 0 0 0 866.6 170.6Z" fill="#8a8a0e" stroke="none"/>
<polygon points="732.8,306.4 763.8,318.3 766.2,348.2 735.6,336.0" fill="#ab0d0d"/>
<polygon points="763.8,318.3 786.6,299.3 788.8,329.9 766.2,348.2" fill="#8f0c0c"/>
<polygon points="755.6,286.1 786.6,299.3 763.8,318.3 732.8,306.4" fill="#a60c0c"/>
</g>
<g fill="none" stroke="#1fa82a" stroke-width="1.3" stroke-linejoin="round"><path d="M799.5 481L799.9 475.2L817.8 467L795.4 465.5L812.4 451L788.5 460.7L764 454.6L785.2 470.3L772.6 481.1L793.8 490"/></g>
<g fill="#1fa82a"><circle cx="764.0" cy="454.6" r="1.5"/><circle cx="788.5" cy="460.7" r="1.5"/><circle cx="812.4" cy="451.0" r="1.5"/><circle cx="795.4" cy="465.5" r="1.5"/><circle cx="817.8" cy="467.0" r="1.5"/><circle cx="799.9" cy="475.2" r="1.5"/><circle cx="772.6" cy="481.1" r="1.5"/><circle cx="785.2" cy="470.3" r="1.5"/></g>
<circle cx="794.6" cy="490.6" r="4.2" fill="#fff"/>
<path d="M799.4 477.6V491M792.7 484.3H806.1" stroke="#111" stroke-width="3.6" fill="none"/><path d="M799.4 478.6V490M793.7 484.3H805.1" stroke="#fff" stroke-width="1.5" fill="none"/>
<path d="M811.2 494.6L819.3 487.6" stroke="#0a6a50" stroke-width="3.4" stroke-linecap="round" fill="none"/><circle cx="810.8" cy="495" r="3" fill="#0a6a50"/><path d="M811.2 494.6L819.3 487.6" stroke="#10a884" stroke-width="2" stroke-linecap="round" fill="none"/><circle cx="810.8" cy="495" r="2.2" fill="#10a884"/>
<g stroke-linecap="round" fill="none"><path d="M1142.8 600.7L1141.3 584" stroke="#22228c" stroke-width="1.5"/><path d="M1141.3 583L1139.8 590.5L1143.4 590.2Z" fill="#22228c" stroke="#22228c" stroke-width=".6"/><path d="M1142.8 600.7L1152.3 593.3" stroke="#28a028" stroke-width="1.5"/><path d="M1142.8 600.7L1160 608" stroke="#962424" stroke-width="1.5"/><path d="M1160.8 608.4L1153.6 607.2L1154.9 604Z" fill="#962424" stroke="#962424" stroke-width=".6"/></g>
<g font-family="Liberation Sans, sans-serif" font-size="9" fill="#101018"><text x="1143.2" y="583.8">Z</text><text x="1154.2" y="593">Y</text><text x="1162.6" y="608.8">X</text></g>
</svg>
</div>

<div class="abs" style="left:283px;top:75px;width:888px;height:1px;background:rgba(247,246,246,.6)"></div><div class="abs" style="left:1170px;top:75px;width:1px;height:554px;background:rgba(247,246,246,.5)"></div><div class="abs" style="left:283px;top:629px;width:887px;height:1px;background:rgba(150,150,170,.3)"></div>
<!-- SNAPBAR -->
<svg class="abs" style="left:1171px;top:75px" width="27" height="360" viewBox="1171 75 27 360">
<defs><linearGradient id="gsb" x1="0" y1="0" x2="0" y2="1"><stop offset="0" stop-color="#fdfdfc"/><stop offset="1" stop-color="#eceae7"/></linearGradient><linearGradient id="glk" x1="0" y1="0" x2="1" y2="0"><stop offset="0" stop-color="#0a8c6c"/><stop offset=".35" stop-color="#5fd0b2"/><stop offset="1" stop-color="#0a8c6c"/></linearGradient></defs>
<path d="M1181.5 79V83M1184.5 79V83M1187.5 79V83" stroke="#d2cfca" stroke-width="1"/>
<rect x="1173.6" y="86.5" width="21" height="21.6" rx="4" fill="#e3e1de" stroke="#c4c1bc" stroke-width="1"/>
<rect x="1173.6" y="110.5" width="21" height="21.6" rx="4" fill="url(#gsb)" stroke="#cac7c2" stroke-width="1"/>
<rect x="1173.6" y="134.5" width="21" height="21.6" rx="4" fill="url(#gsb)" stroke="#cac7c2" stroke-width="1"/>
<rect x="1173.6" y="158.5" width="21" height="21.6" rx="4" fill="url(#gsb)" stroke="#cac7c2" stroke-width="1"/>
<rect x="1173.6" y="182.5" width="21" height="21.6" rx="4" fill="url(#gsb)" stroke="#cac7c2" stroke-width="1"/>
<rect x="1173.6" y="206.5" width="21" height="21.6" rx="4" fill="url(#gsb)" stroke="#cac7c2" stroke-width="1"/>
<rect x="1173.6" y="230.5" width="21" height="21.6" rx="4" fill="#e3e1de" stroke="#c4c1bc" stroke-width="1"/>
<rect x="1173.6" y="254.5" width="21" height="21.6" rx="4" fill="url(#gsb)" stroke="#cac7c2" stroke-width="1"/>
<rect x="1173.6" y="278.5" width="21" height="21.6" rx="4" fill="url(#gsb)" stroke="#cac7c2" stroke-width="1"/>
<rect x="1173.6" y="302.5" width="21" height="21.6" rx="4" fill="url(#gsb)" stroke="#cac7c2" stroke-width="1"/>
<rect x="1173.6" y="326.5" width="21" height="21.6" rx="4" fill="url(#gsb)" stroke="#cac7c2" stroke-width="1"/>
<rect x="1173.6" y="350.5" width="21" height="21.6" rx="4" fill="url(#gsb)" stroke="#cac7c2" stroke-width="1"/>
<rect x="1173.6" y="374.5" width="21" height="21.6" rx="4" fill="url(#gsb)" stroke="#cac7c2" stroke-width="1"/>
<rect x="1173.6" y="398.5" width="21" height="21.6" rx="4" fill="url(#gsb)" stroke="#cac7c2" stroke-width="1"/>
<path d="M1181.6 98V94.9A2.9 3 0 0 1 1187.4 94.9V98" fill="none" stroke="#06654e" stroke-width="2.7"/>
<path d="M1181.6 98V94.9A2.9 3 0 0 1 1187.4 94.9V98" fill="none" stroke="#1a9a7a" stroke-width="1.3"/>
<rect x="1180" y="97.8" width="9" height="6.2" fill="url(#glk)" stroke="#06654e" stroke-width=".7"/>
<path d="M1178.8 125.9L1190.2 117.1" fill="none" stroke="#05523e" stroke-width="3.4" stroke-linecap="square"/><path d="M1178.8 125.9L1190.2 117.1" fill="none" stroke="#0ba27e" stroke-width="1.9" stroke-linecap="square"/>
<ellipse cx="1184.4" cy="121.5" rx="4.2" ry="3.2" transform="rotate(-38 1184.4 121.5)" fill="#0ba27e" stroke="#05523e" stroke-width=".8"/>
<path d="M1183.2 138.9H1185.6V148.7H1190.6V151.5H1178.2V148.7H1183.2Z" fill="#0ba27e" stroke="#05523e" stroke-width=".8"/>
<path d="M1181.6 163.3V175.7M1187.2 163.3V175.7M1178.2 166.7H1190.6M1178.2 172.3H1190.6" fill="none" stroke="#05523e" stroke-width="3.6"/><path d="M1181.6 163.3V175.7M1187.2 163.3V175.7M1178.2 166.7H1190.6M1178.2 172.3H1190.6" fill="none" stroke="#0ba27e" stroke-width="2.2"/>
<rect x="1182.7" y="167.8" width="3.4" height="3.4" fill="#fbfbfa"/>
<path d="M1179.6 188.7L1189.2 198.3M1189.2 188.7L1179.6 198.3" fill="none" stroke="#05523e" stroke-width="4.0"/><path d="M1179.6 188.7L1189.2 198.3M1189.2 188.7L1179.6 198.3" fill="none" stroke="#0ba27e" stroke-width="2.5"/>
<path d="M1181.0 211.7L1191.0 217.3M1178.0 216.9L1187.8 222.7" fill="none" stroke="#05523e" stroke-width="3.4"/><path d="M1181.0 211.7L1191.0 217.3M1178.0 216.9L1187.8 222.7" fill="none" stroke="#0ba27e" stroke-width="1.9"/>
<path d="M1181.4 243.9L1190.0 236.9" fill="none" stroke="#05523e" stroke-width="3.4" stroke-linecap="square"/><path d="M1181.4 243.9L1190.0 236.9" fill="none" stroke="#0ba27e" stroke-width="1.9" stroke-linecap="square"/>
<circle cx="1180.8" cy="244.3" r="2.9" fill="#0ba27e" stroke="#05523e" stroke-width=".8"/>
<path d="M1184.4 260.9L1189.0 265.5L1184.4 270.1L1179.8 265.5Z" fill="#f4fbf8" stroke="#0ba27e" stroke-width="2.6" stroke-linejoin="round"/>
<circle cx="1184.4" cy="260.8" r="2.3" fill="#0ba27e" stroke="#05523e" stroke-width=".7"/>
<circle cx="1189.1" cy="265.5" r="2.3" fill="#0ba27e" stroke="#05523e" stroke-width=".7"/>
<circle cx="1184.4" cy="270.2" r="2.3" fill="#0ba27e" stroke="#05523e" stroke-width=".7"/>
<circle cx="1179.7" cy="265.5" r="2.3" fill="#0ba27e" stroke="#05523e" stroke-width=".7"/>
<circle cx="1184.4" cy="289.5" r="5.2" fill="#eafaf4" stroke="#05523e" stroke-width="3.4"/>
<circle cx="1184.4" cy="289.5" r="5.2" fill="none" stroke="#0ba27e" stroke-width="2.2"/>
<circle cx="1184.4" cy="289.5" r="2" fill="#dff5ee" stroke="#0ba27e" stroke-width="1.2"/>
<circle cx="1180.0" cy="313.5" r="1.9" fill="#0ba27e" stroke="#05523e" stroke-width=".7"/>
<circle cx="1184.4" cy="313.5" r="1.9" fill="#0ba27e" stroke="#05523e" stroke-width=".7"/>
<circle cx="1188.8" cy="313.5" r="1.9" fill="#0ba27e" stroke="#05523e" stroke-width=".7"/>
<path d="M1179.0 336.1L1187.4 342.5" fill="none" stroke="#05523e" stroke-width="3.2" stroke-linecap="square"/><path d="M1179.0 336.1L1187.4 342.5" fill="none" stroke="#0ba27e" stroke-width="1.8" stroke-linecap="square"/>
<circle cx="1186.8" cy="333.3" r="1.9" fill="#0ba27e" stroke="#05523e" stroke-width=".7"/>
<path d="M1184.4 356.5V366.5M1179.4 361.5H1189.4" fill="none" stroke="#05523e" stroke-width="3.4"/><path d="M1184.4 356.5V366.5M1179.4 361.5H1189.4" fill="none" stroke="#0ba27e" stroke-width="1.9"/>
<path d="M1182.0 390.1V382.9H1189.2" fill="none" stroke="#0a7a5e" stroke-width="1.8"/>
<path d="M1183.8 379.1V381.3M1186.0 379.1V381.3M1188.2 379.1V381.3M1178.0 385.1H1180.2M1178.0 387.3H1180.2M1178.0 389.5H1180.2" stroke="#2a9a7c" stroke-width="1"/>
<rect x="1178.3" y="403.4" width="12.2" height="12.2" rx=".8" fill="#0ba27e" stroke="#05523e" stroke-width="1"/>
<circle cx="1181.8" cy="411.5" r="1.5" fill="none" stroke="#05523e" stroke-width=".9"/>
</svg>
<!-- /SNAPBAR -->
<!-- BOTTOM -->
<div id="tabline" class="abs"></div>
<div id="doctab" class="abs"></div>
<svg class="abs" style="left:288px;top:636px" width="18" height="16" viewBox="0 0 18 16"><path d="M2 1.6H8.6V4.2H4.8V6H7.6V8.4H4.8V12.6H2Z" fill="#e8381c"/><path d="M2 1.6H3.4V12.6H2Z" fill="#c82810"/><circle cx="11" cy="8.8" r="3.7" fill="none" stroke="#16269a" stroke-width="2.2" stroke-dasharray="1.7 1.2"/><circle cx="11" cy="8.8" r="2.6" fill="none" stroke="#16269a" stroke-width="1.5"/><circle cx="11" cy="8.8" r="1.3" fill="#f4f4fc"/></svg>
<div class="abs" style="left:312px;top:637px;font-size:13.4px;letter-spacing:.1px;white-space:nowrap">T10-ejemplo-ini : 1*</div>
<svg class="abs" style="left:440px;top:638px" width="14" height="14" viewBox="0 0 14 14"><path d="M2.4 2.8L11 11.2M11 2.8L2.4 11.2" stroke="#4c4b48" stroke-width="2.9"/></svg>
<div id="status" class="abs">230.21 x 143.52 mm</div>
<div id="rightedge" class="abs"></div>
</body>
</html>
